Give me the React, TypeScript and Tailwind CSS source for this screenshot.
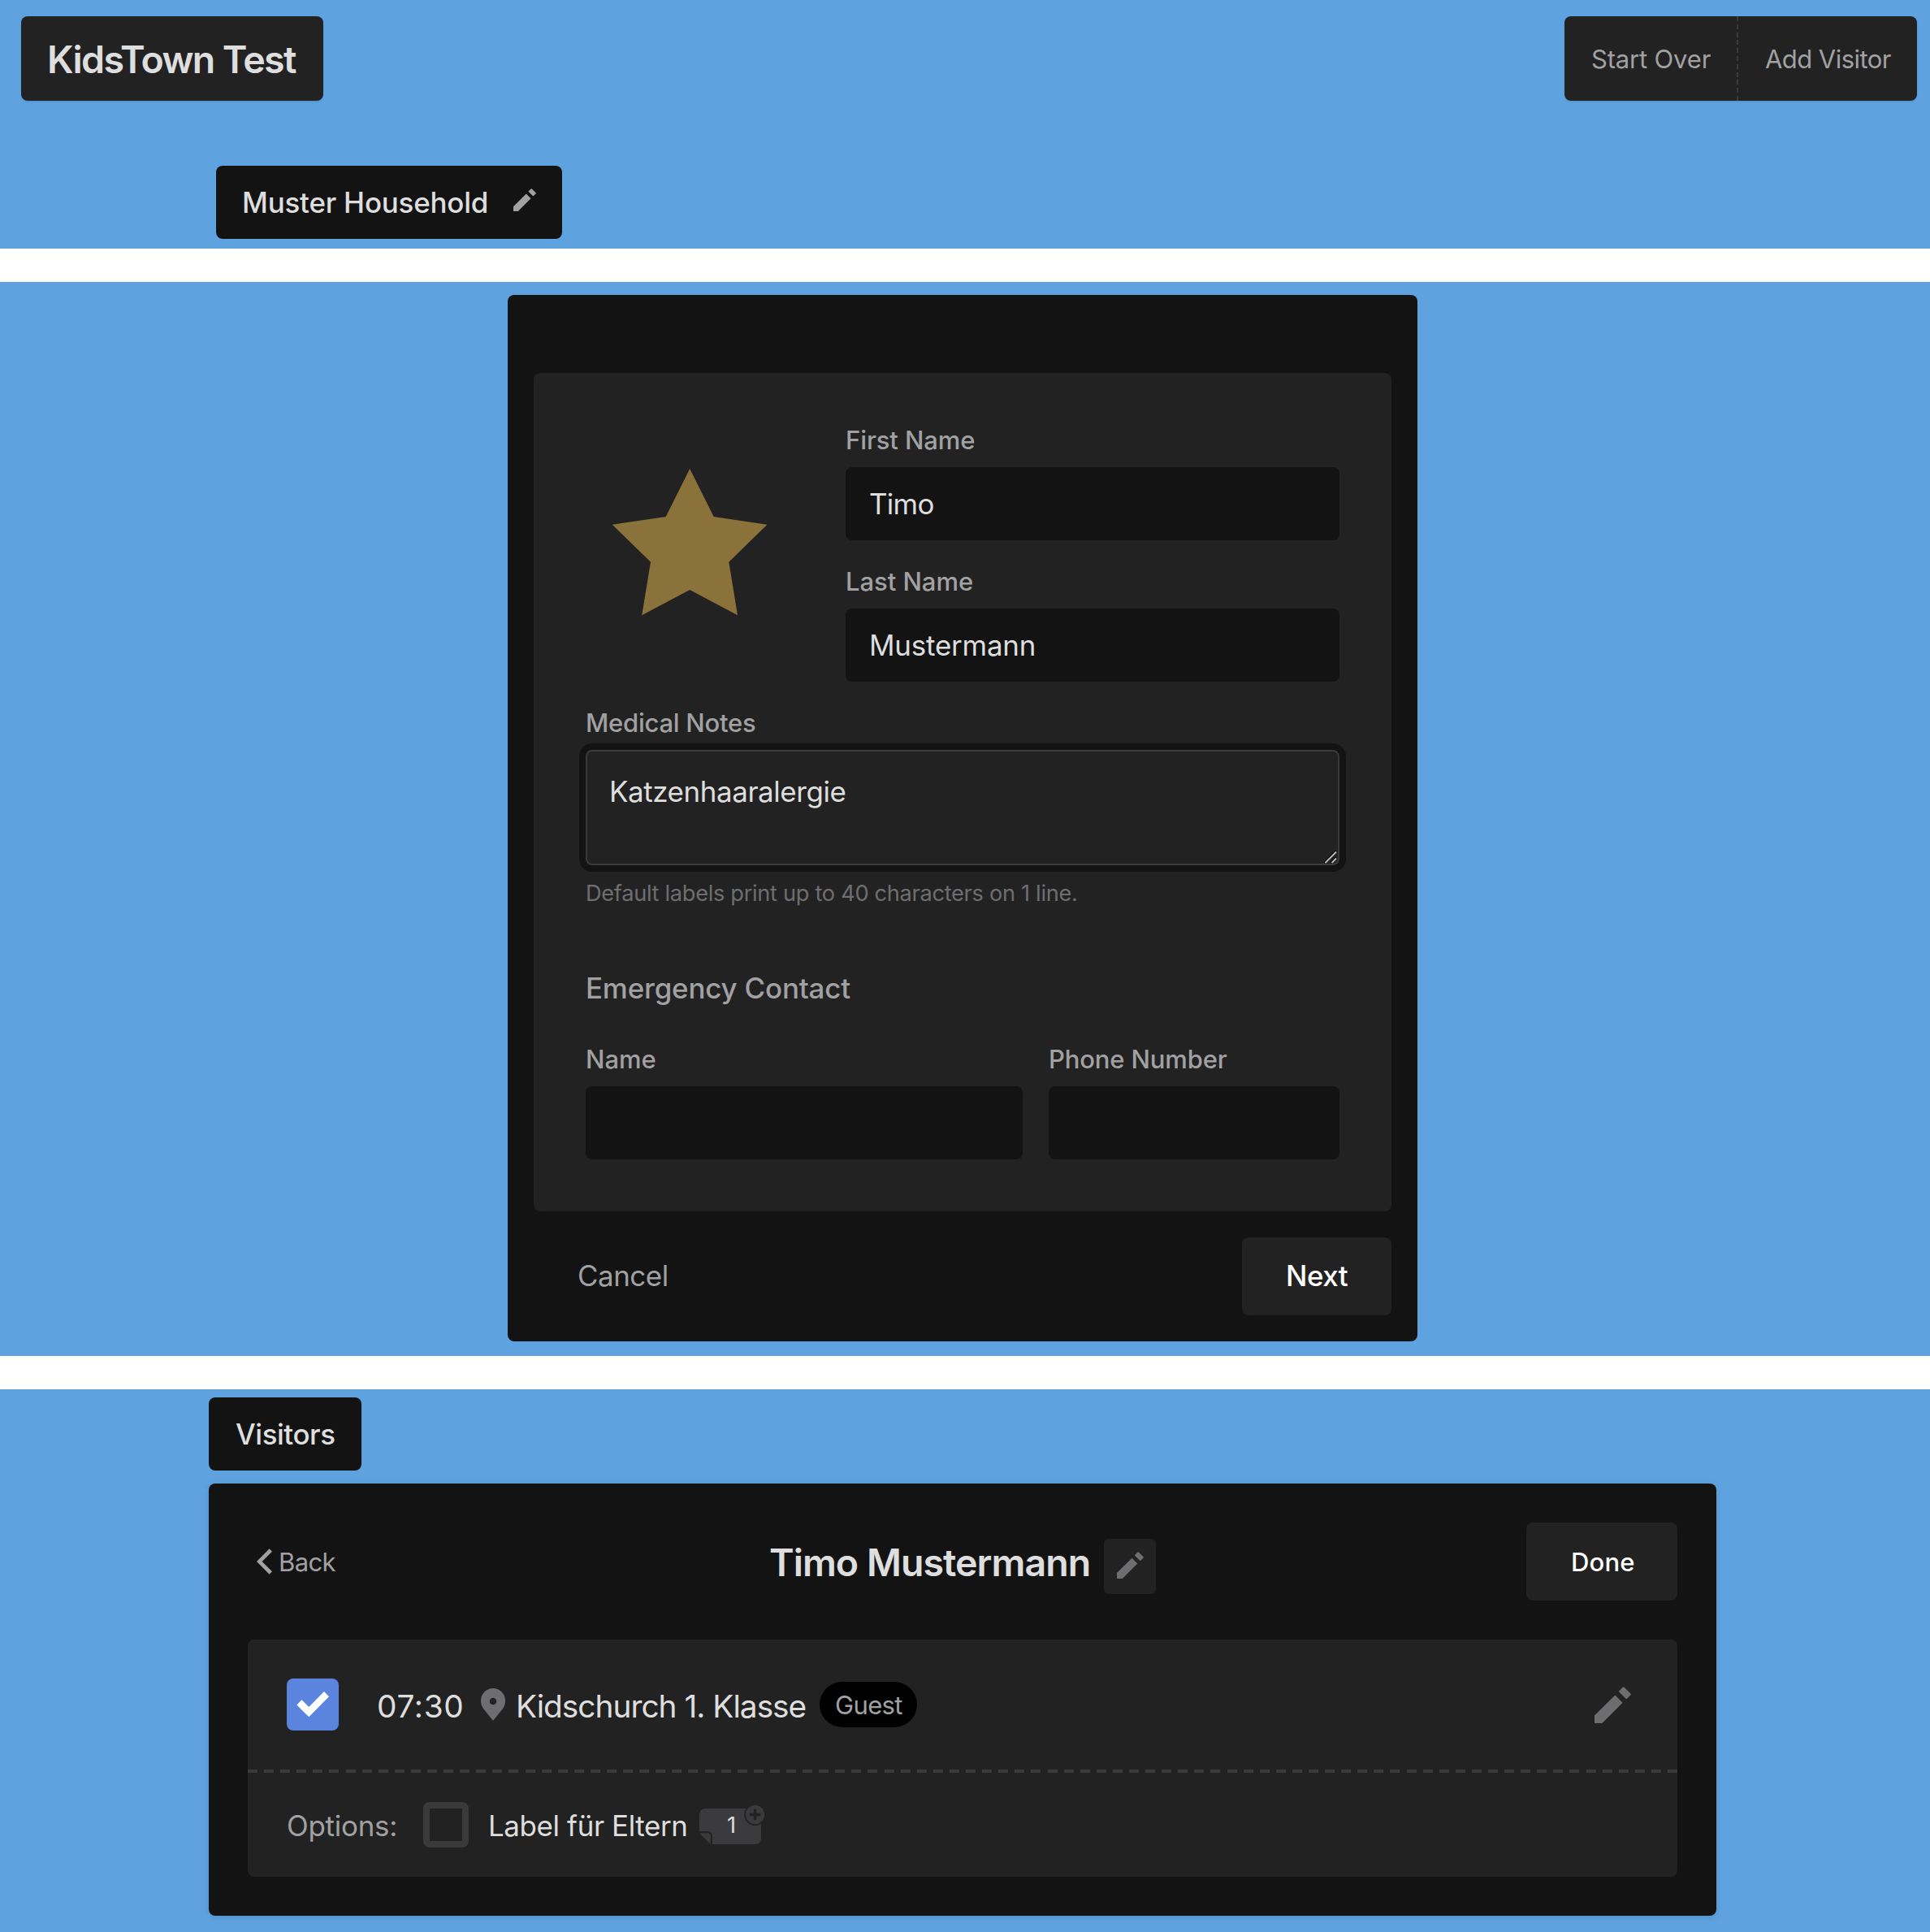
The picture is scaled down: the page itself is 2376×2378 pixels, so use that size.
import type { ReactNode } from "react";

function Pencil({ className }: { className: string }) {
  return (
    <svg viewBox="0 0 45 45" className={className} fill="currentColor" aria-hidden="true">
      <path d="M0 45V35.6L25.3 10.4L34.6 19.7L9.4 45Z" />
      <path d="M29.7 6L34.2 1.2A2 2 0 0 1 37.1 1.2L43.9 8A2 2 0 0 1 43.9 10.9L39.2 15.4Z" />
    </svg>
  );
}

function Field({ label, tracking, children }: { label: string; tracking: string; children?: ReactNode }) {
  return (
    <label className="block">
      <span className={`mb-[15px] block text-[31px] leading-[37px] font-medium text-[#a1a1a3] ${tracking}`}>{label}</span>
      <span className="block h-[90px] rounded-lg bg-[#131313] pt-6 pl-[29px] text-[34.9px] leading-[42px] text-[#dededf]">
        {children}
      </span>
    </label>
  );
}

function HouseholdHeader() {
  return (
    <section className="h-[306px] bg-[#5ea3e0]">
      <div className="flex justify-between pt-5 pr-4 pl-[26px]">
        <h1 className="h-[104px] w-[372px] rounded-lg bg-[#222222] pt-[25px] pl-8 text-[46.5px] leading-[56px] font-semibold tracking-[-1.62px] text-[#dededf] shadow-[0_2px_2px_rgba(0,0,0,0.08)]">
          KidsTown Test
        </h1>
        <nav className="flex h-[104px] w-[434px] rounded-lg bg-[#222222] text-[31px] leading-[37px] text-[#a1a1a3] shadow-[0_2px_2px_rgba(0,0,0,0.08)]">
          <a className="w-[212px] pt-[34px] pl-[33px] tracking-[-0.17px]">Start Over</a>
          <span className="w-[2px] bg-[repeating-linear-gradient(to_bottom,#3a3a3b_0_6px,transparent_6px_9.8px)]" />
          <a className="pt-[34px] pl-[33px] tracking-[-0.55px]">Add Visitor</a>
        </nav>
      </div>
      <div className="mt-20 ml-[266px] flex h-[90px] w-[426px] justify-between rounded-lg bg-[#131313] pt-6 pr-8 pl-8">
        <span className="text-[34.9px] leading-[42px] font-medium tracking-[-0.19px] text-[#dededf]">Muster Household</span>
        <Pencil className="mt-[4px] size-7 text-[#a1a1a3]" />
      </div>
    </section>
  );
}

function VisitorForm() {
  return (
    <section className="h-[1322px] bg-[#5ea3e0] pt-4">
      <div className="ml-[625px] h-[1288px] w-[1120px] rounded-lg bg-[#131313] px-8 pt-24">
        <div className="h-[1032px] rounded-lg bg-[#222222] p-16">
          <div className="flex gap-16">
            <svg viewBox="721 523 256 316" className="h-[316px] w-64" fill="#8b723a" aria-hidden="true">
              <path d="M849.2 577L878.7 636L944.4 645.7L897.3 691.7L908 757.2L849.2 726L790.2 757.2L801 691.7L753.7 645.7L819.7 636Z" />
            </svg>
            <div className="flex w-[608px] flex-col gap-8">
              <Field label="First Name" tracking="tracking-[-0.1px]">
                <span className="tracking-[-0.7px]">Timo</span>
              </Field>
              <Field label="Last Name" tracking="tracking-[-0.04px]">
                <span className="tracking-[-0.19px]">Mustermann</span>
              </Field>
            </div>
          </div>
          <div className="mt-8">
            <div className="mb-[15px] text-[31px] leading-[37px] font-medium tracking-[-0.25px] text-[#a1a1a3]">Medical Notes</div>
            <div className="relative h-[142px] rounded-lg border-2 border-[#3a3a3b] bg-[#222222] pt-7 pl-[27px] text-[34.9px] leading-[42px] tracking-[-0.4px] text-[#dededf] shadow-[0_0_0_8px_#131313]">
              Katzenhaaralergie
              <svg viewBox="0 0 16 16" className="absolute right-[1px] bottom-0 size-4" fill="none" aria-hidden="true">
                <path d="M0.5 14.5L14.5 0.5M8.5 14.5L14.5 8.5" stroke="#000000" strokeWidth="2" />
                <path d="M1.5 15L15 1.5M9.5 15L15 9.5" stroke="#bdbdbd" strokeWidth="1.8" />
              </svg>
            </div>
            <p className="mt-[18px] text-[27.2px] leading-[33px] tracking-[-0.303px] text-[#6e6e70]">
              Default labels print up to 40 characters on 1 line.
            </p>
          </div>
          <h2 className="mt-[79px] text-[34.9px] leading-[42px] font-medium tracking-[-0.17px] text-[#a1a1a3]">Emergency Contact</h2>
          <div className="mt-12 grid grid-cols-[538px_358px] gap-8">
            <Field label="Name" tracking="tracking-[-0.06px]" />
            <Field label="Phone Number" tracking="tracking-[-0.15px]" />
          </div>
        </div>
        <div className="mt-8 flex h-24 justify-between text-[34.9px] leading-[42px]">
          <button className="flex pt-[26px] pl-[54px] tracking-[-0.45px] text-[#a1a1a3]">Cancel</button>
          <button className="flex w-[184px] rounded-lg bg-[#222222] pt-[26px] pl-[54px] font-medium tracking-[-0.5px] text-white">Next</button>
        </div>
      </div>
    </section>
  );
}

function LabelCount() {
  return (
    <span className="relative mt-10 ml-[15px] h-12 w-20">
      <svg viewBox="0 0 80 48" className="h-12 w-20" aria-hidden="true">
        <path d="M7 4H69A7 7 0 0 1 76 11V41A7 7 0 0 1 69 48H16V38A6 6 0 0 0 10 32H0V11A7 7 0 0 1 7 4Z" fill="#3b3b3d" />
        <path d="M0 34.3H10A3.7 3.7 0 0 1 13.8 38V48Z" fill="#3b3b3d" />
        <circle cx="68.6" cy="11.5" r="13.4" fill="#222222" />
        <circle cx="68.6" cy="11.5" r="11.5" fill="#3b3b3d" />
        <path d="M61.8 11.5H75.4M68.6 4.7V18.3" stroke="#222222" strokeWidth="3.6" />
      </svg>
      <span className="absolute top-2 left-[34px] text-[27.2px] leading-[33px] text-[#dededf]">1</span>
    </span>
  );
}

function VisitorCard() {
  return (
    <section className="h-[668px] bg-[#5ea3e0] pt-[10px] pl-[257px]">
      <h2 className="h-[90px] w-[188px] rounded-lg bg-[#131313] pt-6 pl-[33px] text-[34.9px] leading-[42px] font-medium tracking-[-0.44px] text-[#dededf]">
        Visitors
      </h2>
      <div className="mt-4 h-[532px] w-[1856px] rounded-lg bg-[#131313] p-12 shadow-[0_2px_8px_rgba(0,0,0,0.12)]">
        <div className="grid h-24 grid-cols-[1fr_auto_1fr]">
          <a className="flex pt-[30px] pl-[11px] text-[31px] leading-[37px] tracking-[-0.63px] text-[#a1a1a3]">
            <svg viewBox="0 0 19.2 31.6" className="mt-[2px] mr-2 h-8 w-[19px]" fill="currentColor" aria-hidden="true">
              <path d="M0 15.8L15.8 0L19.2 3.4L6.7 15.8L19.2 28.2L15.8 31.6Z" />
            </svg>
            Back
          </a>
          <div className="flex w-[476px] justify-between">
            <h3 className="pt-[21px] text-[46.5px] leading-[56px] font-semibold tracking-[-0.954px] whitespace-nowrap text-[#dededf]">Timo Mustermann</h3>
            <button className="mt-5 h-[68px] w-16 rounded-md bg-[#222222] pl-4">
              <Pencil className="-mt-1 size-[33px] text-[#6e6e70]" />
            </button>
          </div>
          <button className="flex w-[186px] justify-self-end rounded-lg bg-[#222222] pt-[30px] pl-[55px] text-[31px] leading-[37px] font-medium tracking-[0.18px] text-white">
            Done
          </button>
        </div>
        <div className="mt-12 h-[292px] rounded-lg bg-[#222222]">
          <div className="flex h-40 px-12">
            <span className="mt-12 size-16 rounded-lg bg-[#5b84de]">
              <svg viewBox="0 0 64 64" className="size-16" fill="white" aria-hidden="true">
                <path d="M12.3 32.5L18.5 26.2L27.3 35L46 16L52 22.2L27.3 47.3Z" />
              </svg>
            </span>
            <span className="mt-[58px] ml-[47px] w-[128px] text-[38.8px] leading-[47px] tracking-[0.7px] text-[#dededf]">07:30</span>
            <svg viewBox="0 0 30 40" className="mt-[60px] h-10 w-[30px]" fill="#6e6e70" aria-hidden="true">
              <path
                fillRule="evenodd"
                d="M15 40L3 25C1 22 0 19 0 15.5A15 15.5 0 0 1 30 15.5C30 19 29 22 27 25ZM15 11.7A4.3 4.3 0 1 0 15 20.3A4.3 4.3 0 1 0 15 11.7Z"
              />
            </svg>
            <span className="mt-[58px] ml-[13px] w-[374px] text-[38.8px] leading-[47px] tracking-[-0.989px] whitespace-nowrap text-[#dededf]">
              Kidschurch 1. Klasse
            </span>
            <span className="mt-[52px] h-14 w-[120px] rounded-full bg-black pt-[10px] pl-[19px] text-[31px] leading-[37px] tracking-[-0.65px] text-[#a1a1a3]">
              Guest
            </span>
            <Pencil className="mt-[58px] mr-[9px] ml-auto size-[45px] text-[#6e6e70]" />
          </div>
          <div className="h-1 bg-[repeating-linear-gradient(to_right,#3a3a3b_0_12px,transparent_12px_20.092px)]" />
          <div className="flex h-32 pl-12">
            <span className="mt-11 w-[168px] text-[34.9px] leading-[42px] tracking-[-0.22px] text-[#a1a1a3]">Options:</span>
            <span className="mt-9 size-14 rounded-lg border-8 border-[#3a3a3a]" />
            <span className="mt-11 ml-6 w-[245px] text-[34.9px] leading-[42px] tracking-[-0.367px] whitespace-nowrap text-[#dededf]">Label für Eltern</span>
            <LabelCount />
          </div>
        </div>
      </div>
    </section>
  );
}

export default function App() {
  return (
    <main className="flex h-[2378px] w-[2376px] flex-col gap-[41px] overflow-hidden bg-white font-['Inter',sans-serif]">
      <HouseholdHeader />
      <VisitorForm />
      <VisitorCard />
    </main>
  );
}
